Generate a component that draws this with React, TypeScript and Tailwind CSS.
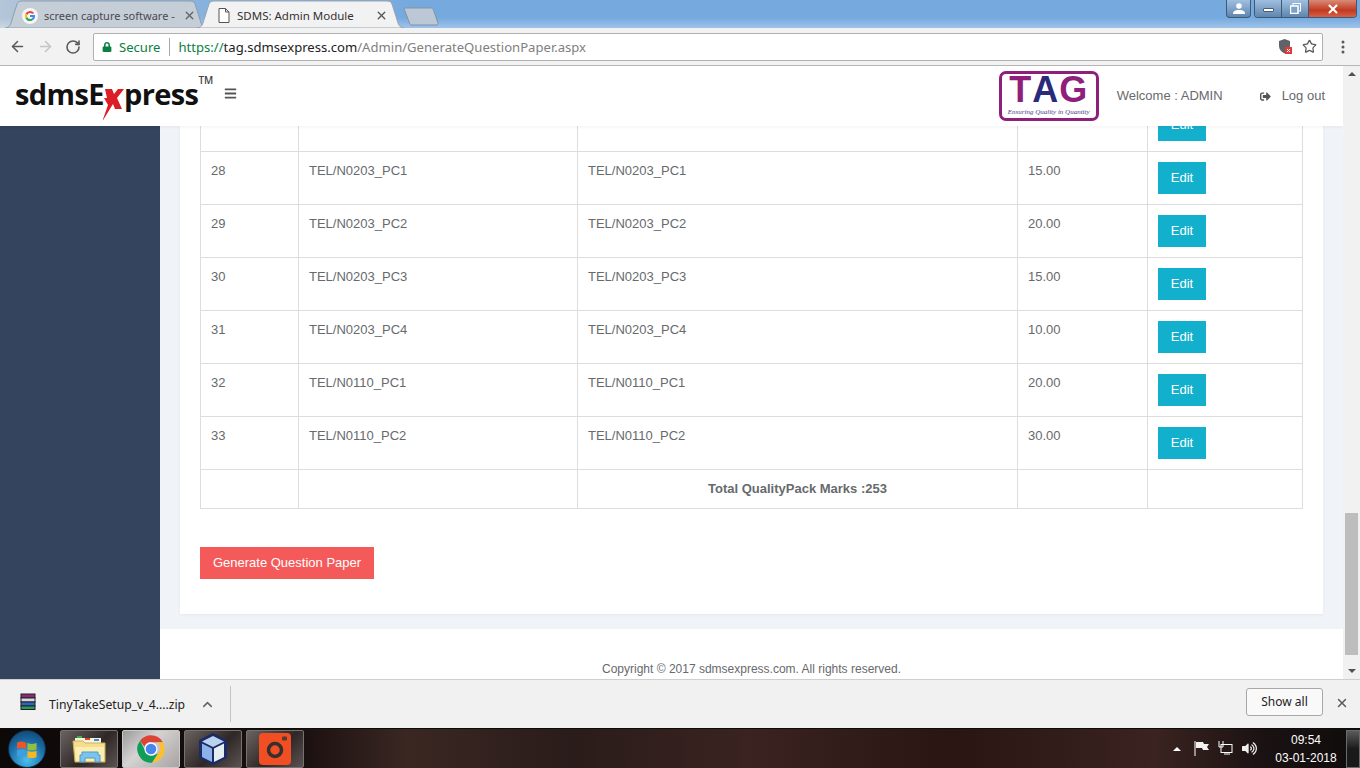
import { ArrowLeft, ArrowRight, ChevronUp, RotateCw, Star, X } from 'lucide-react'
import { FaBars, FaSignOutAlt, FaLock, FaVolumeUp } from 'react-icons/fa'

const filas = [
  { n: '28', code: 'TEL/N0203_PC1', marks: '15.00' },
  { n: '29', code: 'TEL/N0203_PC2', marks: '20.00' },
  { n: '30', code: 'TEL/N0203_PC3', marks: '15.00' },
  { n: '31', code: 'TEL/N0203_PC4', marks: '10.00' },
  { n: '32', code: 'TEL/N0110_PC1', marks: '20.00' },
  { n: '33', code: 'TEL/N0110_PC2', marks: '30.00' },
]

const celda = 'border border-[#dddddd] p-[10px] align-top'

function BotonEdit() {
  return (
    <button className="block h-[32px] w-[48px] bg-[#12b0cd] text-[13px] leading-[18px] text-white">Edit</button>
  )
}

function TabShape({ fill, stroke, w }: { fill: string; stroke: string; w: number }) {
  return (
    <svg className="absolute inset-0" width={w} height={28} viewBox={`0 0 ${w} 28`}>
      <path
        d={`M0 28 C3 28 5 26 6 23 L12 4 C13 2 14 1 17 1 L${w - 17} 1 C${w - 14} 1 ${w - 13} 2 ${w - 12} 4 L${w - 6} 23 C${w - 5} 26 ${w - 3} 28 ${w} 28 Z`}
        fill={fill}
        stroke={stroke}
      />
    </svg>
  )
}

function GoogleG() {
  return (
    <svg width="16" height="16" viewBox="0 0 16 16" className="shrink-0">
      <circle cx="8" cy="8" r="8" fill="#f6f6f6" />
      <path d="M12.3 5.2A5.1 5.1 0 0 0 8 2.9a5.1 5.1 0 0 0-4.5 2.7l1.7 1.3A3.1 3.1 0 0 1 8 4.9c.9 0 1.600.3 2.200.8z" fill="#ea4335" />
      <path d="M3.500 5.600a5.100 5.100 0 0 0 0 4.800l1.700-1.300a3.100 3.100 0 0 1 0-2.200z" fill="#fbbc05" />
      <path d="M3.500 10.400A5.100 5.100 0 0 0 8 13.100c1.300 0 2.500-.4 3.400-1.300L9.800 10.500c-.5.400-1.100.6-1.800.6a3.100 3.100 0 0 1-2.800-2z" fill="#34a853" />
      <path d="M13 8c0-.3 0-.6-.1-.9H8v2h2.900c-.2.600-.6 1.100-1.100 1.400l1.600 1.300C12.400 10.900 13 9.600 13 8z" fill="#4285f4" />
    </svg>
  )
}

function ChromeIcon() {
  return (
    <svg width="30" height="30" viewBox="0 0 48 48">
      <path d="M24 2a22 22 0 0 1 19 11H24a11 11 0 0 0-10.500 7.500L6.500 10.800A22 22 0 0 1 24 2z" fill="#db4437" />
      <path d="M43 13a22 22 0 0 1-17.500 33L35 31a11 11 0 0 0-1.500-18z" fill="#fbc02d" />
      <path d="M25.500 46A22 22 0 0 1 6.500 10.800L15 27a11 11 0 0 0 12.500 7.500l7.500-3.500z" fill="#0f9d58" />
      <circle cx="24" cy="24" r="10.500" fill="#ffffff" />
      <circle cx="24" cy="24" r="8.500" fill="#4a84ee" />
    </svg>
  )
}

function FolderIcon() {
  return (
    <svg width="34" height="32" viewBox="0 0 34 32">
      <path d="M3 5h26v6H3z" fill="#f7f3dc" />
      <rect x="5" y="3" width="5" height="2" fill="#35b34a" />
      <rect x="13" y="5" width="5" height="2" fill="#d9402e" />
      <rect x="22" y="6" width="5" height="2" fill="#3c8fe0" />
      <path d="M1 8h10l2 2h20v19H3z" fill="#f4dd8c" stroke="#cdb25c" />
      <path d="M3 14h29v14H4z" fill="#fbeeb2" />
      <path d="M10 19h16v3h2v7h-5v-4H13v4H8v-7h2z" fill="#7cc4ec" stroke="#4d9ad0" />
    </svg>
  )
}

function CubeIcon() {
  return (
    <svg width="32" height="34" viewBox="0 0 32 34">
      <path d="M16 1 30 8v18l-14 7-14-7V8z" fill="#1c2a66" />
      <path d="M16 4 27 9.500 16 15 5 9.500z" fill="#b9d3ee" />
      <path d="M5 11.500 15 16.500V30L5 25z" fill="#8cb2ea" />
      <path d="M27 11.500 17 16.500V30l10-5z" fill="#e3eef0" />
    </svg>
  )
}

function CameraApp() {
  return (
    <svg width="32" height="32" viewBox="0 0 32 32">
      <rect width="32" height="32" rx="4" fill="#f14e23" />
      <circle cx="16" cy="17" r="6.500" fill="none" stroke="#33302e" strokeWidth="3.500" />
      <rect x="23" y="3.500" width="5" height="4" rx="1" fill="#5a3a30" />
    </svg>
  )
}

function WinOrb() {
  return (
    <div className="flex h-[38px] w-[38px] items-center justify-center rounded-full border border-[#0d2f4a] bg-[radial-gradient(circle_at_50%_80%,#4cc0ee,#1a6ba5_55%,#0f3a5e)]">
      <svg width="22" height="20" viewBox="0 0 24 22">
        <path d="M1 4c3-1.500 6-1.500 10 0v7c-4-1.500-7-1.500-10 0z" fill="#e8562a" />
        <path d="M12.500 4.500c3 1.300 6 1.300 10 0v7c-4 1.300-7 1.300-10 0z" fill="#8fc13e" />
        <path d="M1 12.500c3-1.500 6-1.500 10 0v7c-4-1.500-7-1.500-10 0z" fill="#3e9fe0" />
        <path d="M12.500 13c3 1.300 6 1.300 10 0v7c-4 1.300-7 1.300-10 0z" fill="#f5b81f" />
      </svg>
    </div>
  )
}

function TaskButton({ children, activo }: { children: React.ReactNode; activo?: boolean }) {
  return (
    <div
      className={
        activo
          ? 'flex h-[38px] w-[58px] items-center justify-center rounded-[2px] border border-[#c9c9c9] bg-[linear-gradient(135deg,#9a9a9a,#d6d3d3_40%,#a8a3a3)]'
          : 'flex h-[38px] w-[58px] items-center justify-center rounded-[2px] border border-[#77716f] bg-[linear-gradient(135deg,#6b6362,#2e2726_55%,#5a5352)]'
      }
    >
      {children}
    </div>
  )
}

export default function App() {
  return (
    <div className="flex h-screen w-[1360px] flex-col overflow-hidden bg-white font-['Liberation_Sans',sans-serif] text-[13px] leading-[18px] text-[#676a6c]">
      {/* tabs */}
      <div className="relative flex h-[28px] shrink-0 bg-[linear-gradient(90deg,#b4c6d8_0%,#8fb6de_8%,#76aadf_30%,#76aadf_100%)] pl-[5px] font-['Noto_Sans',sans-serif] text-[11.500px]">
        <div className="absolute inset-x-0 bottom-0 h-[10px] bg-[linear-gradient(180deg,rgba(255,255,255,0),rgba(255,255,255,0.3))]" />
        <div className="relative flex h-[28px] w-[202px] items-center pl-[17px] pt-[3px] text-[#4a4a55]">
          <TabShape fill="#c5cdd6" stroke="#8f9fb0" w={202} />
          <div className="relative flex items-center">
            <GoogleG />
            <span className="ml-[6px] w-[134px] whitespace-nowrap text-[11px]">screen capture software -</span>
            <X className="ml-[5px] text-[#666666]" size={13} strokeWidth={2.500} />
          </div>
        </div>
        <div className="relative z-10 -ml-[10px] flex h-[28px] w-[207px] items-center pl-[21px] pt-[3px] text-[#333333]">
          <TabShape fill="#f2f2f2" stroke="#9aa5b1" w={207} />
          <div className="relative flex items-center">
            <svg width="12" height="15" viewBox="0 0 12 15" className="shrink-0">
              <path d="M1 .500h6.500L11 4v10.500H1z M7.500 .500V4H11" fill="#ffffff" stroke="#555555" />
            </svg>
            <span className="ml-[7px] w-[138px] whitespace-nowrap">SDMS: Admin Module</span>
            <X className="text-[#555555]" size={13} strokeWidth={2.500} />
          </div>
        </div>
        <svg className="relative ml-[-1px] mt-[7px]" width="38" height="20" viewBox="0 0 38 20">
          <path d="M2 1h26c1 0 2 .500 2.500 2L35 16c.300 1 0 2-2 2H9c-1 0-2-.500-2.500-2L1.500 3C1 1.500 1 1 2 1z" fill="#bcc8d6" stroke="#7f93a8" />
        </svg>
        {/* controles de ventana */}
        <div className="absolute right-[3px] top-0 flex h-[18px] items-start">
          <div className="flex h-[18px] w-[25px] items-center justify-center rounded-b-[4px] border border-t-0 border-[#3d5a78] bg-[linear-gradient(180deg,#9fbfe0,#5f86ae)]">
            <svg width="12" height="11" viewBox="0 0 12 11">
              <circle cx="6" cy="3" r="2.800" fill="#fff" />
              <path d="M0 11c0-3 2-4 6-4s6 1 6 4z" fill="#fff" />
            </svg>
          </div>
          <div className="ml-[3px] flex h-[18px] overflow-hidden rounded-b-[4px] border border-t-0 border-[#3d5a78]">
            <div className="flex w-[27px] items-center justify-center border-r border-[#3d5a78] bg-[linear-gradient(180deg,#9fbfe0,#5f86ae)]">
              <div className="mt-[3px] h-[4px] w-[11px] rounded-[1px] border border-[#4a5f75] bg-white" />
            </div>
            <div className="flex w-[27px] items-center justify-center border-r border-[#3d5a78] bg-[linear-gradient(180deg,#9fbfe0,#5f86ae)]">
              <svg width="11" height="11" viewBox="0 0 11 11">
                <rect x="3" y=".500" width="7.500" height="7.500" fill="none" stroke="#fff" />
                <rect x=".500" y="3" width="7.500" height="7.500" fill="#7ba2c9" stroke="#fff" strokeWidth="1.500" />
              </svg>
            </div>
            <div className="flex w-[47px] items-center justify-center bg-[linear-gradient(180deg,#d98a78,#c23a20_60%,#d6604a)]">
              <X className="text-white" size={14} strokeWidth={3.500} />
            </div>
          </div>
        </div>
      </div>

      {/* toolbar */}
      <div className="flex h-[38px] shrink-0 items-center border-b border-[#b5b5b5] bg-[#f2f2f2] pl-[9px] font-['Noto_Sans',sans-serif]">
        <ArrowLeft className="text-[#5a5a5a]" size={17} strokeWidth={2.200} />
        <ArrowRight className="ml-[11px] text-[#c4c4c4]" size={17} strokeWidth={2.200} />
        <RotateCw className="ml-[11px] text-[#5a5a5a]" size={16} strokeWidth={2.400} />
        <div className="ml-[12px] flex h-[28px] w-[1230px] items-center rounded-[2px] border border-[#b0b0b0] bg-white pl-[8px] pr-[5px] text-[13.100px]">
          <FaLock className="text-[#0b8043]" size={10} />
          <span className="ml-[7px] text-[#0b8043]">Secure</span>
          <span className="ml-[9px] h-[18px] w-px bg-[#a8a8a8]" />
          <span className="ml-[8px] whitespace-nowrap text-[#808080]">
            <span className="text-[#0b8043]">https://</span>
            <span className="text-[#222222]">tag.sdmsexpress.com</span>
            /Admin/GenerateQuestionPaper.aspx
          </span>
          <svg className="ml-auto" width="14" height="15" viewBox="0 0 14 15">
            <path d="M5.500 0 11 2v5c0 3-2 6-5.500 7.500C2 13 0 10 0 7V2z" fill="#5f6368" />
            <rect x="6" y="8" width="7" height="7" fill="#e03a3a" />
            <path d="M8 10l3 3m0-3-3 3" stroke="#fff" />
          </svg>
          <Star className="ml-[9px] text-[#5a5a5a]" size={15} strokeWidth={2} />
        </div>
        <svg className="ml-[18px]" width="4" height="14" viewBox="0 0 4 14">
          <circle cx="2" cy="2" r="1.500" fill="#5a5a5a" />
          <circle cx="2" cy="7" r="1.500" fill="#5a5a5a" />
          <circle cx="2" cy="12" r="1.500" fill="#5a5a5a" />
        </svg>
      </div>

      {/* pagina */}
      <div className="flex min-h-0 flex-1">
        <div className="relative flex w-[1343px] overflow-hidden">
          <header className="absolute inset-x-0 top-0 z-20 flex h-[60px] items-center bg-white pl-[15px] pr-[18px] shadow-[0_1px_4px_rgba(0,0,0,0.06)]">
            <div className="flex h-[60px] w-[209px] items-start pt-[8px] font-['Open_Sans',sans-serif] text-[29px] font-bold leading-[40px] tracking-[-0.6px] text-[#111111]">
              <span>sdmsE</span>
              <svg className="-mx-[1px] mt-[7px] shrink-0" width="22" height="40" viewBox="0 0 22 40">
                <path d="M2 8h7l2 5 4-5h6l-7 9 5 11h-7l-2-5-11 18 6-17-4-7 3 0z" fill="#dc1f26" />
              </svg>
              <span>press</span>
              <span className="-mt-[1px] h-[14px] text-[10px] font-semibold leading-[14px] tracking-normal text-[#444444]">TM</span>
            </div>
            <FaBars className="-mt-[6px] text-[#555555]" size={13} />
            <div className="ml-auto flex h-[50px] w-[100px] flex-col items-center rounded-[7px] border-[3px] border-[#8e1f7a] bg-white">
              <div className="mt-[2px] flex h-[28px] items-center font-['Liberation_Sans',sans-serif] text-[36px] font-bold leading-[28px] tracking-[1px] text-[#8e1f7a]">
                <span>T</span>
                <span className="text-[#2a2a7c]">A</span>
                <span>G</span>
              </div>
              <span className="mt-[3px] whitespace-nowrap font-['Liberation_Serif',serif] text-[7px] italic leading-[10px] text-[#4b3a8c]">
                Ensuring Quality in Quantity
              </span>
            </div>
            <span className="ml-[18px]">Welcome : ADMIN</span>
            <FaSignOutAlt className="ml-[37px] text-[#555555]" size={11} />
            <span className="ml-[11px]">Log out</span>
          </header>

          <aside className="h-full w-[160px] shrink-0 bg-[#34435e]" />

          <div className="flex min-w-0 flex-1 flex-col bg-[#f0f3f8]">
            <div className="mx-[20px] bg-white px-[20px] pb-[35px] pt-[32px] shadow-[0_1px_3px_rgba(0,0,0,0.05)]">
              <table className="w-[1102px] table-fixed border-collapse">
                <colgroup>
                  <col className="w-[98px]" />
                  <col className="w-[279px]" />
                  <col className="w-[440px]" />
                  <col className="w-[130px]" />
                  <col className="w-[155px]" />
                </colgroup>
                <tbody>
                  <tr>
                    <td className={celda} />
                    <td className={celda} />
                    <td className={celda} />
                    <td className={celda} />
                    <td className={celda}>
                      <BotonEdit />
                    </td>
                  </tr>
                  {filas.map((f) => (
                    <tr key={f.n}>
                      <td className={celda}>{f.n}</td>
                      <td className={celda}>{f.code}</td>
                      <td className={celda}>{f.code}</td>
                      <td className={celda}>{f.marks}</td>
                      <td className={celda}>
                        <BotonEdit />
                      </td>
                    </tr>
                  ))}
                  <tr>
                    <td className={celda} />
                    <td className={celda} />
                    <td className={`${celda} text-center font-bold`}>Total QualityPack Marks :253</td>
                    <td className={celda} />
                    <td className={celda} />
                  </tr>
                </tbody>
              </table>
              <button className="mt-[38px] block h-[32px] w-[174px] bg-[#f55a5a] text-[13px] leading-[18px] text-white">
                Generate Question Paper
              </button>
            </div>
            <div className="mt-[15px] flex flex-1 items-end justify-center bg-white pb-[1px] text-[12px] leading-[18px]">
              Copyright © 2017 sdmsexpress.com. All rights reserved.
            </div>
          </div>
        </div>

        {/* scrollbar */}
        <div className="flex w-[17px] flex-col items-center bg-[#f1f1f1] py-[6px]">
          <span className="h-0 w-0 border-x-[4px] border-b-[4px] border-x-transparent border-b-[#505050]" />
          <span className="mt-[437px] h-[142px] w-[13px] bg-[#bdbdbd]" />
          <span className="mt-auto h-0 w-0 border-x-[4px] border-t-[4px] border-x-transparent border-t-[#505050]" />
        </div>
      </div>

      {/* barra de descargas */}
      <div className="flex h-[49px] shrink-0 items-center border-t border-[#cfcfcf] bg-[#f1f1f1] pl-[20px] pr-[11px] font-['Noto_Sans',sans-serif] text-[12.200px] text-[#222222]">
        <svg className="-mt-[6px]" width="17" height="17" viewBox="0 0 17 17">
          <rect x="1" y="1" width="14" height="4" fill="#8b2a7a" stroke="#222" />
          <rect x="1" y="5" width="14" height="4" fill="#d9d9d9" stroke="#222" />
          <rect x="1" y="9" width="14" height="4" fill="#2a64c8" stroke="#222" />
          <rect x="1" y="13" width="14" height="3.500" fill="#2a9a5a" stroke="#222" />
        </svg>
        <span className="ml-[12px] mt-[2px] whitespace-nowrap">TinyTakeSetup_v_4....zip</span>
        <ChevronUp className="ml-[15px] text-[#666666]" size={15} strokeWidth={2.500} />
        <span className="ml-[15px] h-[36px] w-px bg-[#c4c4c4]" />
        <button className="-mt-[5px] ml-auto h-[28px] w-[77px] rounded-[3px] border border-[#a8a8a8] bg-[#f9f9f9] text-[12px] text-[#222222]">
          Show all
        </button>
        <X className="-mt-[3px] ml-[12px] text-[#5a5a5a]" size={14} strokeWidth={2.500} />
      </div>

      {/* taskbar */}
      <div className="flex h-[40px] shrink-0 items-center border-t border-[#0c0c0c] bg-[linear-gradient(90deg,#0d0808_0%,#1a1010_22%,#3a2722_30%,#2a1c1a_42%,#3a2320_55%,#2a1513_70%,#3a2320_85%,#1a1212_93%,#100c0c_100%)] pl-[8px] font-['Liberation_Sans',sans-serif] text-[12px] text-white">
        <WinOrb />
        <div className="ml-[14px] flex gap-[4px]">
          <TaskButton><FolderIcon /></TaskButton>
          <TaskButton activo><ChromeIcon /></TaskButton>
          <TaskButton><CubeIcon /></TaskButton>
          <TaskButton><CameraApp /></TaskButton>
        </div>
        <div className="ml-auto flex items-center">
          <span className="h-0 w-0 border-x-[4px] border-b-[4px] border-x-transparent border-b-white" />
          <svg className="ml-[13px]" width="15" height="15" viewBox="0 0 15 15">
            <path d="M1 0v15" stroke="#fff" />
            <path d="M2 1h7l1 2h5l-2 3 2 3H9L8 7H2z" fill="#f2f2f2" />
          </svg>
          <svg className="ml-[9px]" width="15" height="15" viewBox="0 0 15 15">
            <rect x="3" y="3.500" width="11" height="8" fill="none" stroke="#fff" />
            <path d="M1 0v6h4V0M6 13h6" stroke="#fff" fill="none" />
          </svg>
          <FaVolumeUp className="ml-[9px] text-[#eeeeee]" size={15} />
          <div className="ml-[19px] flex w-[60px] flex-col items-center leading-[18px]">
            <span>09:54</span>
            <span className="whitespace-nowrap">03-01-2018</span>
          </div>
          <div className="ml-[10px] h-[38px] w-[14px] border border-[#6b6b6b] bg-[linear-gradient(180deg,#5a5a5a,#1a1a1a_50%)]" />
        </div>
      </div>
    </div>
  )
}
